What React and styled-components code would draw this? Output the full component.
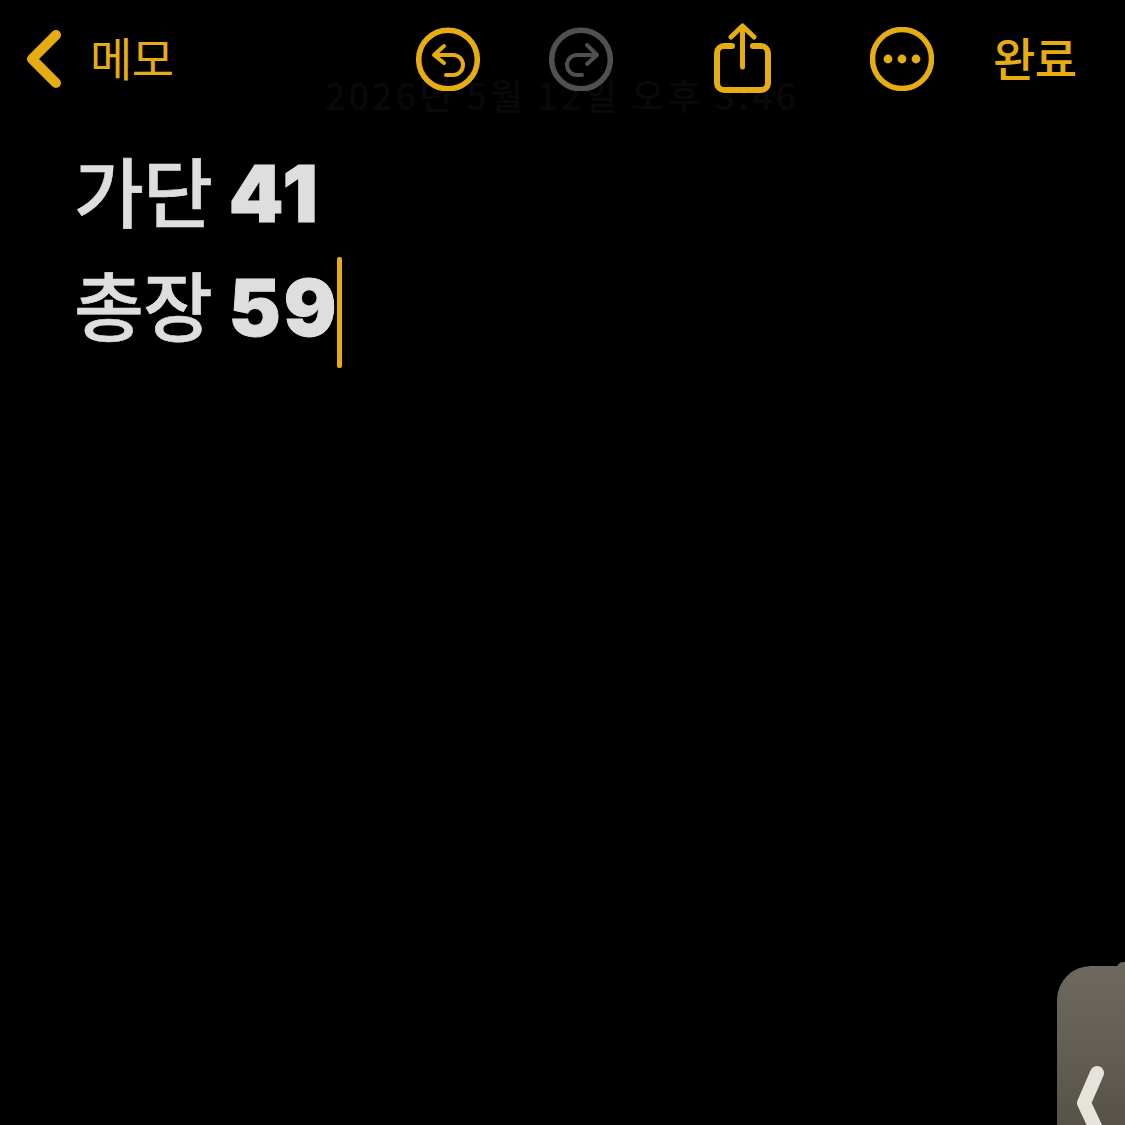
import React from "react";
import styled, { createGlobalStyle } from "styled-components";

const Y = "#e6ad12";
const KR = `"Noto Sans CJK KR", "Noto Sans", sans-serif`;

const Global = createGlobalStyle`
  html, body { margin: 0; padding: 0; background: #000; }
  #root { height: 1125px; }
`;
const Screen = styled.div`
  position: relative;
  width: 1125px;
  height: 1125px;
  background: #000;
  overflow: hidden;
  font-family: ${KR};
`;
const Toolbar = styled.header`
  position: relative;
  z-index: 1;
  display: flex;
  align-items: center;
  height: 72px;
  padding: 23px 40px 0 26px;
  color: ${Y};
`;
const Back = styled.div`
  display: flex;
  align-items: center;
  gap: 26px;
  width: 390px;
`;
const Label = styled.span`
  font-size: 46px;
  font-weight: ${p => p.$weight || 400};
  line-height: 72px;
  letter-spacing: -0.5px;
  white-space: nowrap;
  position: relative;
  top: -3px;
`;
const IconSlot = styled.div`
  display: flex;
  width: ${p => p.$w}px;
  margin-left: ${p => p.$ml}px;
  flex: none;
`;
const Ghost = styled.div`
  position: absolute;
  z-index: 0;
  left: 325px;
  top: 72px;
  font-size: 36px;
  font-weight: 500;
  line-height: 44px;
  letter-spacing: 3px;
  color: #090909;
  white-space: nowrap;
`;
const Note = styled.main`
  padding: 37px 0 0 74px;
  color: #dedede;
`;
const Line = styled.div`
  display: flex;
  align-items: baseline;
  height: 114px;
  font-size: 76px;
  line-height: 114px;
  font-weight: 500;
  letter-spacing: -1px;
  white-space: nowrap;
  -webkit-text-stroke: 0.6px #dedede;
`;
const Num = styled.span`
  font-family: Inter, "Liberation Sans", sans-serif;
  font-weight: 900;
  font-size: 78px;
  letter-spacing: 3px;
  margin-left: 17px;
  -webkit-text-stroke: 1px #dedede;
`;
const Caret = styled.span`
  align-self: flex-start;
  width: 5px;
  height: 111px;
  margin: 11px 0 0 -2px;
  border-radius: 2px;
  background: ${Y};
`;
const Handle = styled.div`
  position: absolute;
  right: 0;
  top: 966px;
  width: 68px;
  height: 159px;
  padding-top: 99px;
  box-sizing: border-box;
  border-radius: 34px 0 0 0;
  background: linear-gradient(180deg, #6e695f 0%, #625d53 60%, #565248 100%);
  &::after {
    content: "";
    position: absolute;
    top: -4px;
    right: 0;
    width: 8px;
    height: 6px;
    border-radius: 8px 0 0 0;
    background: #6e695f;
  }
`;

const Stroke = ({ w, h, children, color = Y, sw = 5.5 }) => (
  <svg width={w} height={h} viewBox={`0 0 ${w} ${h}`} fill="none" stroke={color} strokeWidth={sw} strokeLinecap="round" strokeLinejoin="round">
    {children}
  </svg>
);

export default function App() {
  return (
    <Screen>
      <Global />
      <Ghost>2026년 5월 12일 오후 3:46</Ghost>
      <Toolbar>
        <Back>
          <Stroke w={38} h={60} sw={10}>
            <path d="M30 6 L6 30 L30 54" />
          </Stroke>
          <Label>메모</Label>
        </Back>
        <IconSlot $w={64} $ml={0}>
          <Stroke w={64} h={64}>
            <circle cx="32" cy="32.5" r="29.3" />
            <path strokeWidth="4" d="M28 19 L18 28 L28 36" />
            <path strokeWidth="4" d="M19 28 H37 A10 10 0 0 1 37 48 H30" />
          </Stroke>
        </IconSlot>
        <IconSlot $w={64} $ml={69}>
          <Stroke w={64} h={64} color="#505053">
            <circle cx="32" cy="32.5" r="29.3" />
            <path strokeWidth="4" d="M38 18 L48 28 L38 37" />
            <path strokeWidth="4" d="M47 28 H28 A10 10 0 0 0 28 48 H33" />
          </Stroke>
        </IconSlot>
        <IconSlot $w={58} $ml={101}>
          <Stroke w={58} h={72} sw={6}>
            <path d="M18 23 H10 A7 7 0 0 0 3 30 V60 A7 7 0 0 0 10 67 H47 A7 7 0 0 0 54 60 V30 A7 7 0 0 0 47 23 H39" />
            <path strokeWidth="5" d="M28.5 4 V44" />
            <path strokeWidth="5" d="M17 14 L28.5 3 L40 14" />
          </Stroke>
        </IconSlot>
        <IconSlot $w={64} $ml={98}>
          <Stroke w={64} h={64}>
            <circle cx="32" cy="32" r="29.5" />
            <circle cx="18" cy="32" r="4.4" fill={Y} stroke="none" />
            <circle cx="32" cy="32" r="4.4" fill={Y} stroke="none" />
            <circle cx="46" cy="32" r="4.4" fill={Y} stroke="none" />
          </Stroke>
        </IconSlot>
        <IconSlot $w={84} $ml={59}>
          <Label $weight={500}>완료</Label>
        </IconSlot>
      </Toolbar>
      <Note>
        <Line>가단<Num>41</Num></Line>
        <Line>총장<Num>59</Num><Caret /></Line>
      </Note>
      <Handle>
        <svg width="68" height="60" viewBox="0 0 68 60" fill="none" stroke="#e6e2dc" strokeWidth="14" strokeLinecap="round" strokeLinejoin="round">
          <path d="M40 8 L27 38 L42 70" />
        </svg>
      </Handle>
    </Screen>
  );
}
